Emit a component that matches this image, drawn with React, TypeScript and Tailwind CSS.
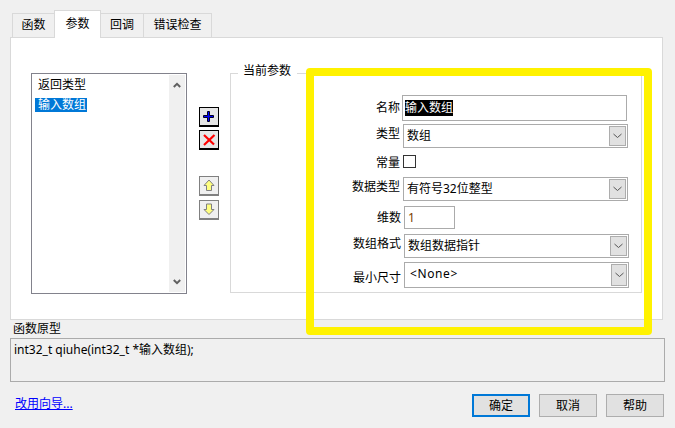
import React from "react";

const font = "font-['Noto_Sans','Noto_Sans_CJK_SC',sans-serif]";

function Chevron({ className = "" }: { className?: string }) {
  return (
    <svg width="9" height="6" viewBox="0 0 9 6" className={className}>
      <path d="M0.5 1 L4.5 4.5 L8.5 1" fill="none" stroke="#555" strokeWidth="1" />
    </svg>
  );
}

function Select({ text, className, btn }: { text: string; className: string; btn: string }) {
  return (
    <div className={`flex items-center justify-between border border-[#ababab] bg-white pl-[3px] pr-[1px] ${className}`}>
      <span className="text-[12px] leading-[16px] text-black">{text}</span>
      <div className={`flex items-center justify-center border border-[#adadad] bg-[#e1e1e1] ${btn}`}>
        <Chevron />
      </div>
    </div>
  );
}

function Label({ text, className = "" }: { text: string; className?: string }) {
  return <span className={`w-[171px] pr-[2px] text-right text-[12px] leading-[16px] text-black ${className}`}>{text}</span>;
}

function ToolButton({ active, children, className = "" }: { active?: boolean; children: React.ReactNode; className?: string }) {
  return (
    <div
      className={`flex h-[20px] w-[20px] items-center justify-center border border-b-[2px] ${
        active ? "border-black bg-[#e6e6e6]" : "border-[#808080] bg-[#f0f0f0]"
      } ${className}`}
    >
      {children}
    </div>
  );
}

export default function App() {
  return (
    <div className={`relative h-[428px] w-[675px] overflow-hidden bg-[#f0f0f0] pl-[10px] pt-[10px] ${font}`}>
      {/* tabs */}
      <div className="relative z-10 flex h-[28px] items-end pl-[2px] text-[12px] text-black">
        <div className="flex h-[25px] w-[42px] items-center justify-center border border-b-0 border-r-0 border-[#d9d9d9] pb-[2px]">函数</div>
        <div className="flex h-[28px] w-[47px] items-start justify-center border border-b-0 border-[#d9d9d9] bg-white pt-[4px]">参数</div>
        <div className="flex h-[25px] w-[42px] items-center justify-center border-t border-[#d9d9d9] pb-[2px]">回调</div>
        <div className="flex h-[25px] w-[69px] items-center justify-center border border-b-0 border-[#d9d9d9] pb-[2px]">错误检查</div>
      </div>

      {/* panel */}
      <div className="-mt-[1px] flex h-[283px] w-[653px] border border-[#d9d9d9] bg-white pl-[20px] pt-[35px]">
        {/* list */}
        <div className="flex h-[221px] w-[156px] border border-[#82828c] bg-white pb-[1px] pr-[1px] pt-[1px]">
          <div className="flex-1 pl-[3px] pt-[3px] text-[12px] leading-[14px] text-black">
            <div className="pl-[3px]">返回类型</div>
            <div className="mt-[6px] w-[52px] bg-[#0078d7] pl-[3px] text-white">输入数组</div>
          </div>
          <div className="flex w-[16px] flex-col items-center justify-between bg-[#f0f0f0] py-[7px]">
            <svg width="8" height="6" viewBox="0 0 8 6"><path d="M0.8 5 L4 1.8 L7.2 5" fill="none" stroke="#606060" strokeWidth="2" /></svg>
            <svg width="8" height="6" viewBox="0 0 8 6"><path d="M0.8 1 L4 4.2 L7.2 1" fill="none" stroke="#606060" strokeWidth="2" /></svg>
          </div>
        </div>

        {/* tool buttons */}
        <div className="ml-[12px] flex w-[20px] flex-col pt-[34px]">
          <ToolButton active>
            <svg width="14" height="14" viewBox="0 0 14 14">
              <path d="M5.5 1.5h2v4h4v2h-4v4h-2v-4h-4v-2h4z" fill="#0000ff" stroke="#000020" strokeWidth="1" />
            </svg>
          </ToolButton>
          <ToolButton active className="mt-[3px]">
            <svg width="14" height="14" viewBox="0 0 14 14">
              <path d="M2 2 L12 11.5 M12.5 2 L2 12" fill="none" stroke="#ff0000" strokeWidth="2.2" />
            </svg>
          </ToolButton>
          <ToolButton className="mt-[26px]">
            <svg width="12" height="13" viewBox="0 0 12 13">
              <path d="M6 1 L11 6.5 H8.5 V11.5 H3.5 V6.5 H1 Z" fill="#ffff80" stroke="#808080" strokeWidth="1" />
            </svg>
          </ToolButton>
          <ToolButton className="mt-[4px]">
            <svg width="12" height="13" viewBox="0 0 12 13">
              <path d="M3.5 1 H8.5 V6.5 H11 L6 11.5 L1 6.5 H3.5 Z" fill="#ffff80" stroke="#808080" strokeWidth="1" />
            </svg>
          </ToolButton>
        </div>

        {/* group */}
        <div className="relative ml-[11px] h-[220px] w-[412px] border border-[#d9d9d9] pt-[21px]">
          <span className="absolute -top-[11px] left-[7px] bg-white pl-[5px] pr-[6px] text-[12px] leading-[16px] text-black">当前参数</span>

          <div className="flex items-center">
            <Label text="名称" className="-mt-[1px]" />
            <div className="flex h-[26px] w-[225px] items-center border border-[#ababab] bg-white pl-[2px]">
              <span className="bg-black text-[12px] leading-[16px] text-white">输入数组</span>
            </div>
          </div>
          <div className="mt-[3px] flex items-center">
            <Label text="类型" className="-mt-[5px]" />
            <Select text="数组" className="ml-[1px] h-[24px] w-[225px]" btn="h-[20px] w-[17px]" />
          </div>
          <div className="mt-[5px] flex items-start">
            <Label text="常量" className="mt-[2px]" />
            <div className="ml-[1px] mt-[2px] h-[13px] w-[13px] border border-[#333] bg-white" />
          </div>
          <div className="mt-[6px] flex items-center">
            <Label text="数据类型" className="-mt-[4px]" />
            <Select text="有符号32位整型" className="ml-[1px] h-[24px] w-[225px]" btn="h-[20px] w-[17px]" />
          </div>
          <div className="mt-[5px] flex items-center">
            <Label text="维数" className="ml-[1px]" />
            <div className="ml-[1px] flex h-[23px] w-[51px] items-center border border-[#ababab] bg-white pl-[3px] text-[12px] text-[#7a3e00]">1</div>
          </div>
          <div className="mt-[5px] flex items-center">
            <Label text="数组格式" className="-mt-[5px] ml-[1px]" />
            <Select text="数组数据指针" className="ml-[1px] h-[24px] w-[225px]" btn="h-[20px] w-[17px]" />
          </div>
          <div className="mt-[4px] flex items-center">
            <Label text="最小尺寸" className="mt-[5px] ml-[1px]" />
            <div className="ml-[1px] flex h-[26px] w-[225px] items-center justify-between border border-[#ababab] bg-white pl-[5px] pr-[1px]">
              <span className="-mt-[2px] text-[12px] tracking-[0.6px] text-black">&lt;None&gt;</span>
              <div className="flex h-[22px] w-[16px] items-center justify-center border border-[#adadad] bg-[#e1e1e1]">
                <Chevron />
              </div>
            </div>
          </div>
        </div>
      </div>

      {/* prototype */}
      <div className="ml-[3px] mt-[1px] h-[17px] text-[12px] leading-[16px] text-black">函数原型</div>
      <div className="h-[44px] w-[655px] border border-[#ababab] pl-[3px] text-[12px] leading-[16px] text-black">
        <div className="mt-[3px]">int32_t qiuhe(int32_t *输入数组);</div>
      </div>

      {/* footer */}
      <div className="mt-[12px] flex w-[654px] items-center justify-between">
        <a className="-mt-[3px] ml-[5px] text-[12px] leading-[16px] text-[#0000ff] underline">改用向导...</a>
        <div className="flex gap-[9px] text-[12px] text-black">
          <div className="flex h-[23px] w-[58px] items-center justify-center border-2 border-[#0078d7] bg-[#e1e1e1]">确定</div>
          <div className="flex h-[23px] w-[58px] items-center justify-center border border-[#adadad] bg-[#e1e1e1]">取消</div>
          <div className="flex h-[23px] w-[58px] items-center justify-center border border-[#adadad] bg-[#e1e1e1]">帮助</div>
        </div>
      </div>

      {/* yellow annotation */}
      <div className="absolute left-[306px] top-[68px] h-[267px] w-[346px] rounded-[4px] border-[8px] border-[#fff200]" />
    </div>
  );
}
